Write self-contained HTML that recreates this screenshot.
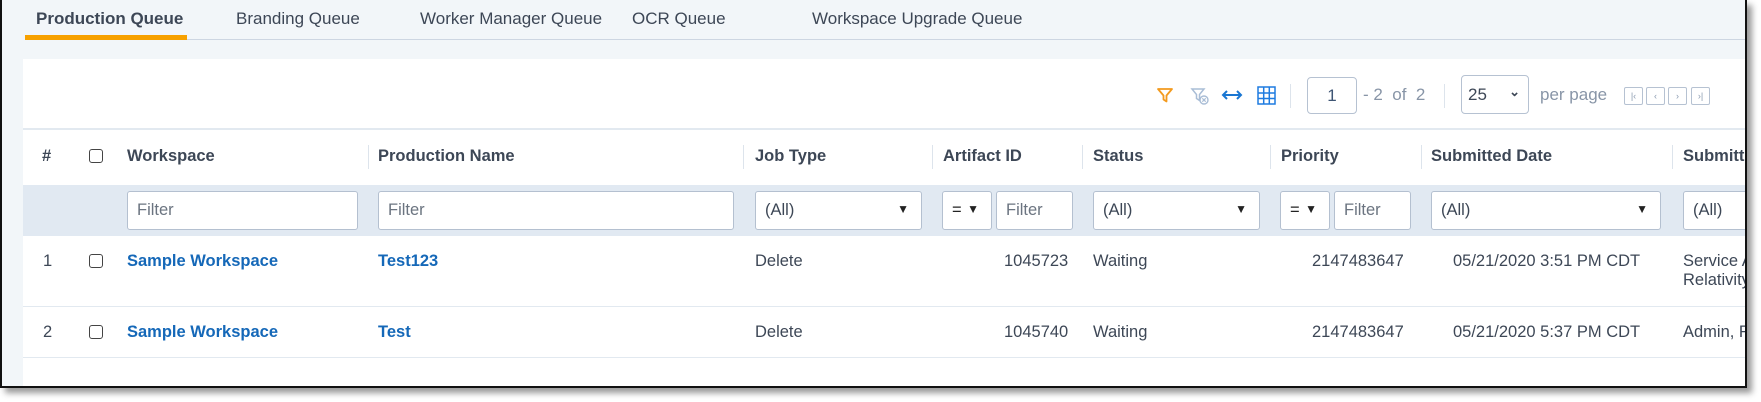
<!DOCTYPE html>
<html><head><meta charset="utf-8"><style>
*{box-sizing:border-box;margin:0;padding:0}
body{width:1761px;height:402px;background:#fff;position:relative;overflow:hidden;font-family:"Liberation Sans",sans-serif;color:#3d4756}
#frame{position:absolute;left:0;top:0;width:1747px;height:388px;border:2px solid #111;border-top:none;background:#f2f6f9;box-shadow:5px 5px 6px #999;overflow:hidden}
.a{position:absolute;white-space:nowrap}
.tab{font-size:17px;top:9px;color:#3d4756}
.hd{font-size:16.5px;font-weight:bold;top:147px;color:#3d4756}
.sep{position:absolute;width:1px;background:#dde4ec}
.in{position:absolute;top:191px;height:39px;background:#fff;border:1px solid #b4c0d0;border-radius:3px;font-size:16.5px;color:#6b7480;padding:9px 9px}
.tri{position:absolute;right:12px;top:10px;font-size:12px;color:#222}
.c{font-size:16.5px;color:#3d4756}
.lk{font-size:16.5px;font-weight:bold;color:#1568b8}
.cb{position:absolute;width:14px;height:14px;border:1.5px solid #444;border-radius:3px;background:#fff}
.nb{position:absolute;top:87px;width:19px;height:18px;border:1px solid #b6c2d2;border-radius:2px;font-size:9px;color:#8a9ab0;text-align:center;line-height:16px}
</style></head><body>
<div id="frame">
<div class="a tab" style="left:34px;font-weight:bold">Production Queue</div>
<div class="a tab" style="left:234px">Branding Queue</div>
<div class="a tab" style="left:418px">Worker Manager Queue</div>
<div class="a tab" style="left:630px">OCR Queue</div>
<div class="a tab" style="left:810px">Workspace Upgrade Queue</div>
<div class="a" style="left:23px;top:39px;width:1730px;height:1px;background:#cdd6e2"></div>
<div class="a" style="left:23px;top:35px;width:162px;height:5px;background:#f7a100"></div>
<div class="a" style="left:21px;top:59px;width:1730px;height:330px;background:#fff"></div>
<div class="a" style="left:21px;top:128px;width:1730px;height:2px;background:#e2e9f0"></div>
<svg class="a" style="left:1154px;top:86px" width="18" height="18" viewBox="0 0 18 18"><path d="M2 3h14l-5.5 6.5v6l-3-2v-4z" fill="none" stroke="#f39a1e" stroke-width="1.8" stroke-linejoin="round"/></svg>
<svg class="a" style="left:1188px;top:86px" width="20" height="20" viewBox="0 0 20 20"><path d="M2 3h12l-4.5 5.5v6l-3-2v-4z" fill="none" stroke="#a9bdd6" stroke-width="1.5"/><circle cx="14" cy="14" r="4" fill="#fff" stroke="#a9bdd6" stroke-width="1.4"/><path d="M12.3 12.3l3.4 3.4M15.7 12.3l-3.4 3.4" stroke="#a9bdd6" stroke-width="1.2"/></svg>
<svg class="a" style="left:1219px;top:88px" width="22" height="14" viewBox="0 0 22 14"><path d="M2 7h18M6 3L2 7l4 4M16 3l4 4-4 4" fill="none" stroke="#1976d2" stroke-width="2"/></svg>
<svg class="a" style="left:1255px;top:86px" width="19" height="19" viewBox="0 0 19 19"><path d="M1 1h17v17H1zM1 7h17M1 12.5h17M6.7 1v17M12.3 1v17" fill="none" stroke="#1e7be0" stroke-width="1.5"/></svg>
<div class="sep" style="left:1288px;top:84px;height:24px"></div>
<div class="a" style="left:1305px;top:77px;width:50px;height:37px;border:1px solid #b6c2d2;border-radius:4px;font-size:17px;color:#3e5574;text-align:center;line-height:35px">1</div>
<div class="a c" style="left:1361px;top:85px;font-size:17px;color:#8895a7">- 2 &nbsp;of &nbsp;2</div>
<div class="sep" style="left:1442px;top:84px;height:24px"></div>
<div class="a" style="left:1459px;top:75px;width:68px;height:39px;border:1px solid #b6c2d2;border-radius:4px;font-size:17px;color:#3d4756;padding:9px 6px">25<span style="position:absolute;right:8px;top:8px;font-size:13px;font-weight:bold">&#8964;</span></div>
<div class="a c" style="left:1538px;top:85px;font-size:17px;color:#8895a7">per page</div>
<div class="nb" style="left:1622px">|‹</div>
<div class="nb" style="left:1644px">‹</div>
<div class="nb" style="left:1666px">›</div>
<div class="nb" style="left:1689px">›|</div>
<div class="a hd" style="left:40px">#</div>
<div class="cb" style="left:87px;top:149px"></div>
<div class="a hd" style="left:125px">Workspace</div>
<div class="sep" style="left:366px;top:145px;height:24px"></div>
<div class="a hd" style="left:376px">Production Name</div>
<div class="sep" style="left:741px;top:145px;height:24px"></div>
<div class="a hd" style="left:753px">Job Type</div>
<div class="sep" style="left:930px;top:145px;height:24px"></div>
<div class="a hd" style="left:941px">Artifact ID</div>
<div class="sep" style="left:1080px;top:145px;height:24px"></div>
<div class="a hd" style="left:1091px">Status</div>
<div class="sep" style="left:1268px;top:145px;height:24px"></div>
<div class="a hd" style="left:1279px">Priority</div>
<div class="sep" style="left:1419px;top:145px;height:24px"></div>
<div class="a hd" style="left:1429px">Submitted Date</div>
<div class="sep" style="left:1670px;top:145px;height:24px"></div>
<div class="a hd" style="left:1681px">Submitted By</div>
<div class="a" style="left:21px;top:185px;width:1730px;height:51px;background:#e1e9f2"></div>
<div class="in" style="left:125px;width:231px">Filter</div>
<div class="in" style="left:376px;width:356px">Filter</div>
<div class="in" style="left:753px;width:167px;color:#3d4756">(All)<span class="tri">▼</span></div>
<div class="in" style="left:940px;width:50px;color:#222">=<span class="tri">▼</span></div>
<div class="in" style="left:994px;width:77px">Filter</div>
<div class="in" style="left:1091px;width:167px;color:#3d4756">(All)<span class="tri">▼</span></div>
<div class="in" style="left:1278px;width:50px;color:#222">=<span class="tri">▼</span></div>
<div class="in" style="left:1332px;width:77px">Filter</div>
<div class="in" style="left:1429px;width:230px;color:#3d4756">(All)<span class="tri">▼</span></div>
<div class="in" style="left:1681px;width:100px;color:#3d4756">(All)</div>
<div class="a c" style="left:41px;top:252px">1</div>
<div class="cb" style="left:87px;top:254px"></div>
<div class="a lk" style="left:125px;top:252px">Sample Workspace</div>
<div class="a lk" style="left:376px;top:252px">Test123</div>
<div class="a c" style="left:753px;top:252px">Delete</div>
<div class="a c" style="left:1002px;top:252px">1045723</div>
<div class="a c" style="left:1091px;top:252px">Waiting</div>
<div class="a c" style="left:1310px;top:252px">2147483647</div>
<div class="a c" style="left:1451px;top:252px">05/21/2020 3:51 PM CDT</div>
<div class="a c" style="left:1681px;top:252px;line-height:19px">Service Account,<br>Relativity</div>
<div class="a" style="left:21px;top:306px;width:1730px;height:1px;background:#e2e9f0"></div>
<div class="a c" style="left:41px;top:323px">2</div>
<div class="cb" style="left:87px;top:325px"></div>
<div class="a lk" style="left:125px;top:323px">Sample Workspace</div>
<div class="a lk" style="left:376px;top:323px">Test</div>
<div class="a c" style="left:753px;top:323px">Delete</div>
<div class="a c" style="left:1002px;top:323px">1045740</div>
<div class="a c" style="left:1091px;top:323px">Waiting</div>
<div class="a c" style="left:1310px;top:323px">2147483647</div>
<div class="a c" style="left:1451px;top:323px">05/21/2020 5:37 PM CDT</div>
<div class="a c" style="left:1681px;top:323px">Admin, Relativity</div>
<div class="a" style="left:21px;top:357px;width:1730px;height:1px;background:#e2e9f0"></div>
</div>
</body></html>
